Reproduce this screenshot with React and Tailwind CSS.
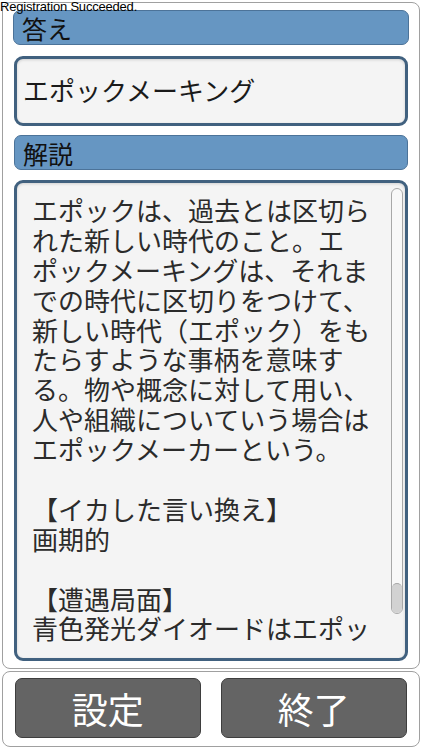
import React from 'react';

const jp = { fontFamily: '"Noto Sans CJK JP", "Noto Sans", sans-serif' };

const explanation = [
    'エポックは、過去とは区切ら',
    'れた新しい時代のこと。エ',
    'ポックメーキングは、それま',
    'での時代に区切りをつけて、',
    '新しい時代（エポック）をも',
    'たらすような事柄を意味す',
    'る。物や概念に対して用い、',
    '人や組織についていう場合は',
    'エポックメーカーという。',
    '',
    '【イカした言い換え】',
    '画期的',
    '',
    '【遭遇局面】',
    '青色発光ダイオードはエポッ',
];

const SectionHeader = ({ label }) => (
    <div className="h-[35px] rounded-[7px] border border-[#4c7399] bg-[#6696c2] pl-[8px] flex items-center">
        <span className="text-[25px] leading-none text-[#111] pt-[1px]">{label}</span>
    </div>
);

const App = () => {
    return (
        <div className="relative w-[422px] h-[750px] bg-white overflow-hidden" style={jp}>
            <div
                className="absolute top-0 left-0 z-10 text-[13px] leading-[14px] text-black tracking-[-0.2px]"
                style={{ fontFamily: '"Liberation Sans", Arial, sans-serif' }}
            >
                Registration Succeeded.
            </div>

            <div className="mx-[2px] mt-[2px] h-[667px] rounded-[8px] border border-[#a0a0a0] bg-white px-[10px] pt-[7px] flex flex-col">
                <SectionHeader label="答え" />

                <div className="mt-[11px] mx-[1px] h-[70px] rounded-[9px] border-[3px] border-[#41617f] bg-[#f4f4f4] pl-[6px] pb-[2px] flex items-center shadow-[inset_0_1px_3px_rgba(0,0,0,0.15)]">
                    <span className="text-[26px] leading-none text-[#1a1a1a]">エポックメーキング</span>
                </div>

                <div className="mt-[9px] mx-[1px]">
                    <SectionHeader label="解説" />
                </div>

                <div className="relative mt-[10px] mx-[1px] h-[481px] rounded-[9px] border-[3px] border-[#41617f] bg-[#f4f4f4] overflow-hidden shadow-[inset_0_1px_3px_rgba(0,0,0,0.15)]">
                    <div className="pl-[15px] pt-[12px] text-[26px] leading-[29.9px] text-[#2b2b2b] whitespace-pre">
                        {explanation.map((line, i) => (
                            <div key={i} className="h-[29.9px]">{line}</div>
                        ))}
                    </div>
                    <div className="absolute right-[2px] top-[5px] w-[12px] h-[426px] rounded-full border border-[#a8a8a8] bg-[#f8f8f8] flex flex-col justify-end">
                        <div className="h-[30px] rounded-full border-t border-[#a8a8a8] bg-[#d2d2d2]"></div>
                    </div>
                </div>
            </div>

            <div className="mx-[2px] mt-[2px] h-[76px] rounded-[8px] border border-[#a0a0a0] bg-white px-[12px] pt-[6px] flex gap-[20px]">
                <button className="w-[186px] h-[60px] rounded-[7px] border border-[#3e3e3e] bg-[#646464] text-white text-[36px] leading-none flex items-center justify-center" style={jp}>
                    設定
                </button>
                <button className="w-[187px] h-[60px] rounded-[7px] border border-[#3e3e3e] bg-[#646464] text-white text-[36px] leading-none flex items-center justify-center" style={jp}>
                    終了
                </button>
            </div>
        </div>
    );
};

export default App;
